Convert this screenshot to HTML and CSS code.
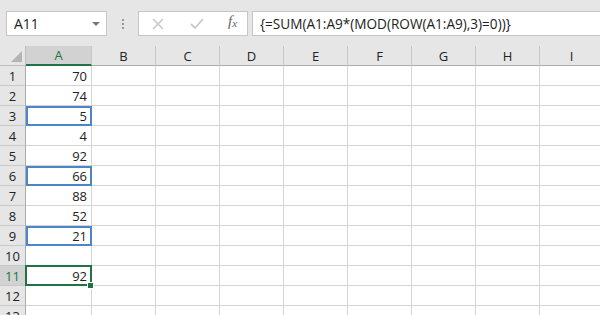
FILE: index.html
```html
<!DOCTYPE html>
<html lang="en">
<head>
    <meta charset="UTF-8">
    <title>Sheet</title>
    <link rel="stylesheet" href="styles.css">
</head>
<body>

    <div class="toolbar">
        <div class="name-box">
            <span>A11</span>
            <span class="caret"></span>
        </div>
        <div class="grip"><i></i><i></i><i></i></div>
        <div class="buttons">
            <svg class="btn-icon" width="12" height="12" viewBox="0 0 12 12"><path d="M1 1 L11 11 M11 1 L1 11" stroke="#c8c8c8" stroke-width="1.6" fill="none"/></svg>
            <svg class="btn-icon" width="14" height="12" viewBox="0 0 14 12"><path d="M1 6 L5 10 L13 1" stroke="#c8c8c8" stroke-width="1.8" fill="none"/></svg>
            <span class="fx">f<sub>x</sub></span>
        </div>
        <div class="formula">{=SUM(A1:A9*(MOD(ROW(A1:A9),3)=0))}</div>
    </div>

    <div class="sheet" id="sheet"></div>

    <script>
        const values = [70, 74, 5, 4, 92, 66, 88, 52, 21, "", 92, "", ""];
        const cols = ["A", "B", "C", "D", "E", "F", "G", "H", "I"];
        const sheet = document.getElementById("sheet");
        let html = '<div class="corner"><span></span></div>';
        cols.forEach(c => {
            html += `<div class="col-head${c === "A" ? " active" : ""}">${c}</div>`;
        });
        values.forEach((v, i) => {
            const row = i + 1;
            let cls = "cell num";
            if (row % 3 === 0 && row < 10) cls += " picked";
            if (row === 11) cls += " current";
            html += `<div class="row-head${row === 11 ? " active" : ""}">${row}</div>`;
            html += `<div class="${cls}">${v}</div>`;
            for (let k = 1; k < cols.length; k++) html += '<div class="cell"></div>';
        });
        sheet.innerHTML = html;
    </script>

</body>
</html>
```

FILE: styles.css
```css
/* General Styles */
body {
    margin: 0;
    background-color: #e6e6e6;
    font-family: "Open Sans", "Noto Sans", sans-serif;
    color: #222;
    overflow: hidden;
}

/* Formula bar */
.toolbar {
    height: 46px;
    display: flex;
    align-items: flex-start;
    padding-top: 11px;
    box-sizing: border-box;
}
.name-box {
    margin-left: 6px;
    width: 101px;
    height: 25px;
    box-sizing: border-box;
    background: white;
    border: 1px solid #c6c6c6;
    display: flex;
    align-items: center;
    justify-content: space-between;
    padding: 0 6px 0 7px;
    font-size: 14px;
}
.caret {
    width: 0;
    height: 0;
    border-left: 4px solid transparent;
    border-right: 4px solid transparent;
    border-top: 4px solid #777;
}
.grip {
    width: 31px;
    height: 25px;
    display: flex;
    flex-direction: column;
    align-items: center;
    justify-content: center;
    gap: 2px;
}
.grip i {
    width: 2px;
    height: 2px;
    background: #9a9a9a;
}
.buttons {
    width: 110px;
    height: 25px;
    box-sizing: border-box;
    background: white;
    border: 1px solid #c6c6c6;
    display: flex;
    align-items: center;
    padding-left: 13px;
}
.btn-icon {
    margin-right: 26px;
}
.buttons .btn-icon:nth-child(2) {
    margin-right: 24px;
}
.fx {
    font-family: "Liberation Serif", serif;
    font-style: italic;
    font-size: 15px;
    color: #666;
    margin-top: -4px;
}
.fx sub {
    font-size: 11px;
    vertical-align: -1px;
}
.formula {
    margin-left: 4px;
    flex: 1;
    height: 25px;
    box-sizing: border-box;
    background: white;
    border: 1px solid #c6c6c6;
    border-right: none;
    padding-left: 7px;
    font-size: 13.6px;
    line-height: 23px;
}

/* Grid */
.sheet {
    display: grid;
    grid-template-columns: 26px 66px repeat(8, 64px);
    grid-auto-rows: 20px;
    background: white;
    width: 600px;
    overflow: hidden;
    font-size: 13px;
}
.corner, .col-head, .row-head {
    background: #e6e6e6;
    box-sizing: border-box;
    display: flex;
    align-items: center;
    justify-content: center;
}
.corner {
    border-right: 1px solid #bdbdbd;
    border-bottom: 1px solid #bdbdbd;
    position: relative;
}
.corner span {
    position: absolute;
    right: 3px;
    bottom: 3px;
    width: 0;
    height: 0;
    border-left: 11px solid transparent;
    border-bottom: 11px solid #b4b4b4;
}
.col-head {
    border-right: 1px solid #c8c8c8;
    border-bottom: 1px solid #ababab;
}
.col-head.active {
    background: #d2d2d2;
    color: #217346;
    border-bottom: 2px solid #217346;
}
.row-head {
    border-right: 1px solid #ababab;
    border-bottom: 1px solid #c8c8c8;
}
.row-head.active {
    background: #d2d2d2;
    color: #217346;
}
.cell {
    box-sizing: border-box;
    border-right: 1px solid #d4d4d4;
    border-bottom: 1px solid #d4d4d4;
    position: relative;
}
.num {
    text-align: right;
    padding-right: 4px;
    line-height: 20px;
}
.picked::after,
.current::after {
    content: "";
    position: absolute;
    top: 0;
    left: 0;
    right: -1px;
    bottom: -1px;
    border: 2px solid #4a86c8;
}
.current::after {
    top: -1px;
    left: -1px;
    border-color: #217346;
}
.current::before {
    content: "";
    position: absolute;
    right: -3px;
    bottom: -4px;
    width: 5px;
    height: 5px;
    background: #217346;
    border: 1px solid white;
    z-index: 2;
}
```
